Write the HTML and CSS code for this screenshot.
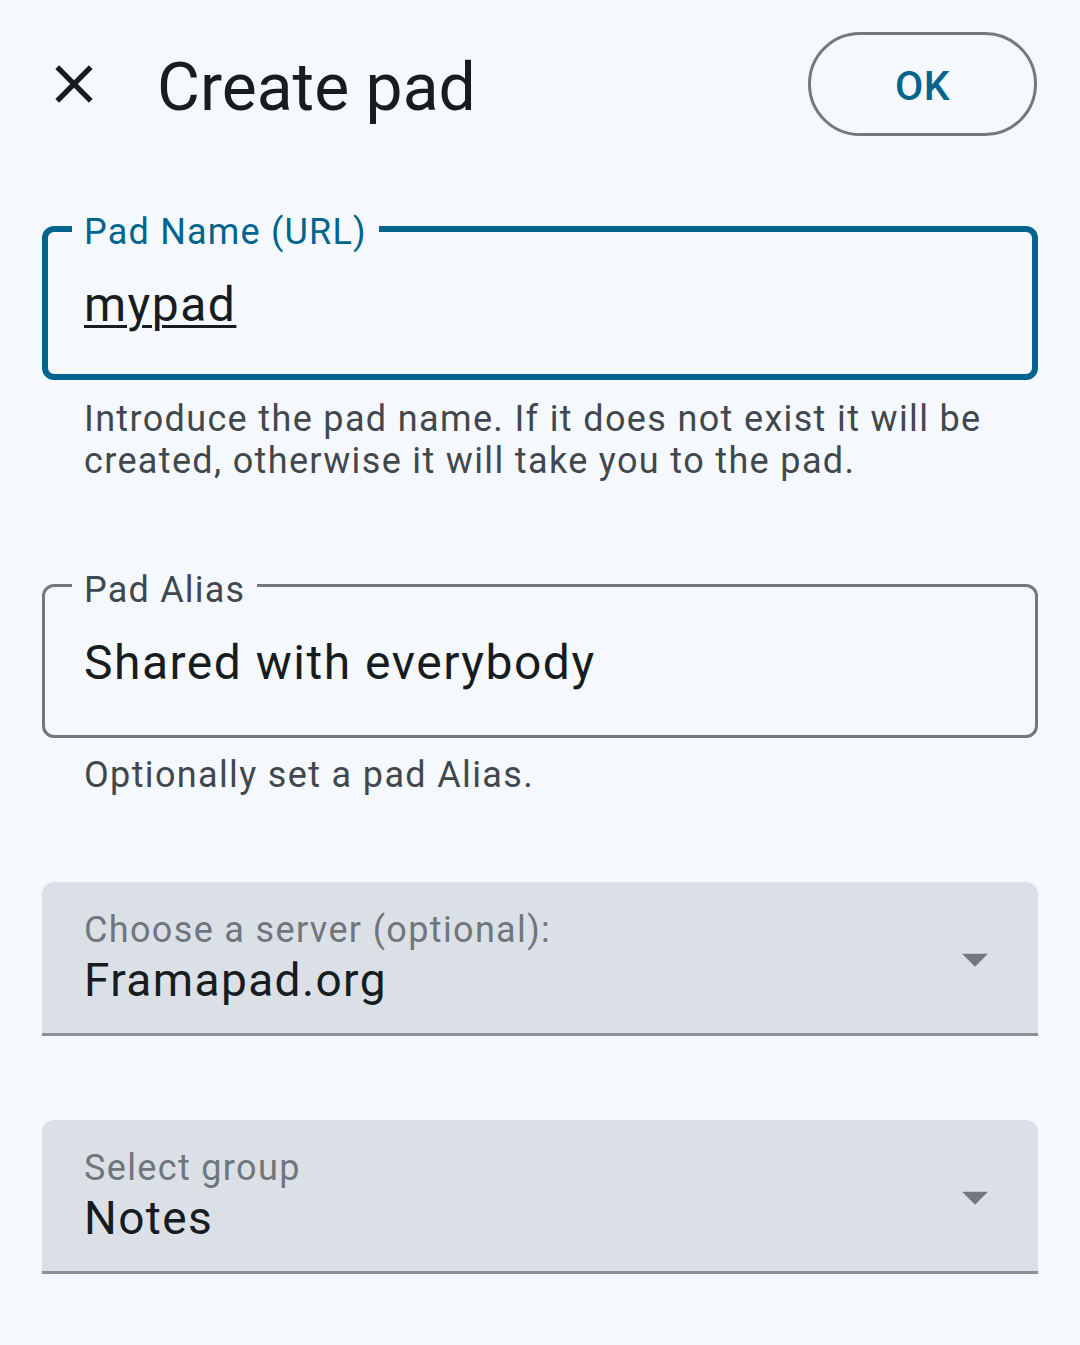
FILE: index.html
```html
<!DOCTYPE html>
<html lang="en">
<head>
<meta charset="utf-8">
<title>Create pad</title>
<link rel="stylesheet" href="styles.css">
</head>
<body>
<div class="screen">
  <header class="topbar">
    <button class="icon-btn" aria-label="Close">
      <svg viewBox="0 0 24 24" width="64" height="64"><path fill="currentColor" d="M19 6.41L17.59 5 12 10.59 6.41 5 5 6.41 10.59 12 5 17.59 6.41 19 12 13.41 17.59 19 19 17.59 13.41 12z"/></svg>
    </button>
    <h1 class="title">Create pad</h1>
    <div class="spacer"></div>
    <button class="ok-btn">OK</button>
  </header>

  <main class="form">
    <div class="outlined focused">
      <span class="float-label">Pad Name (URL)</span>
      <span class="value underlined">mypad</span>
    </div>
    <p class="helper">Introduce the pad name. If it does not exist it will be<br>created, otherwise it will take you to the pad.</p>

    <div class="outlined alias">
      <span class="float-label">Pad Alias</span>
      <span class="value">Shared with everybody</span>
    </div>
    <p class="helper helper-alias">Optionally set a pad Alias.</p>

    <div class="filled server">
      <div class="filled-text">
        <span class="filled-label">Choose a server (optional):</span>
        <span class="filled-value">Framapad.org</span>
      </div>
      <svg class="arrow" viewBox="0 0 24 24" width="62" height="62"><path fill="currentColor" d="M7 10l5 5 5-5z"/></svg>
    </div>

    <div class="filled group">
      <div class="filled-text">
        <span class="filled-label">Select group</span>
        <span class="filled-value">Notes</span>
      </div>
      <svg class="arrow" viewBox="0 0 24 24" width="62" height="62"><path fill="currentColor" d="M7 10l5 5 5-5z"/></svg>
    </div>
  </main>
</div>
</body>
</html>
```

FILE: styles.css
```css
* { box-sizing: border-box; }

html, body {
  margin: 0;
  padding: 0;
  background: #f5f9fd;
}

body {
  font-family: Roboto, "Noto Sans", "Liberation Sans", sans-serif;
  color: #171c20;
  width: 1080px;
  height: 1345px;
  overflow: hidden;
}

.topbar {
  display: flex;
  align-items: center;
  padding: 32px 43px 0 42px;
  height: 136px;
}

.icon-btn {
  width: 64px;
  height: 64px;
  padding: 0;
  margin: 0;
  border: 0;
  background: transparent;
  color: #171c20;
  display: flex;
  align-items: center;
  justify-content: center;
}

.icon-btn svg { display: block; }

.title {
  margin: 7px 0 0 51px;
  font-size: 66px;
  line-height: 66px;
  font-weight: 400;
  letter-spacing: 0;
  color: #171c20;
}

.spacer { flex: 1; }

.ok-btn {
  width: 229px;
  height: 104px;
  border: 3px solid #71787e;
  border-radius: 52px;
  background: transparent;
  color: #00658e;
  font-family: Roboto, "Noto Sans", sans-serif;
  font-size: 41px;
  font-weight: 500;
  letter-spacing: 0.5px;
  padding: 4px 0 0 0;
}

.form {
  padding: 0 42px;
  display: flex;
  flex-direction: column;
}

.outlined {
  position: relative;
  height: 154px;
  border: 3px solid #71787e;
  border-radius: 12px;
  display: flex;
  align-items: center;
  padding-left: 39px;
  padding-top: 4px;
}

.outlined.focused {
  margin-top: 90px;
  border: 6px solid #00658e;
  padding-left: 36px;
}

.outlined.alias {
  margin-top: 102px;
}

.float-label {
  position: absolute;
  left: 27px;
  top: -18px;
  padding: 0 12px;
  background: #f5f9fd;
  font-size: 36px;
  line-height: 42px;
  letter-spacing: 1.2px;
  color: #41484d;
}

.focused .float-label {
  left: 24px;
  top: -21px;
  color: #00658e;
}

.value {
  font-size: 48px;
  line-height: 56px;
  letter-spacing: 1.5px;
  color: #171c20;
}

.underlined {
  text-decoration: underline;
  text-decoration-thickness: 3px;
  text-underline-offset: 4px;
}

.helper {
  margin: 18px 0 0 0;
  padding-left: 42px;
  font-size: 36px;
  line-height: 42px;
  letter-spacing: 1.35px;
  color: #41484d;
}

.helper-alias {
  margin-top: 16px;
}

.filled {
  height: 154px;
  background: #dbe0e6;
  border-bottom: 3px solid #8a9096;
  border-radius: 12px 12px 0 0;
  display: flex;
  align-items: center;
  padding: 0 32px 0 42px;
}

.filled.server { margin-top: 86px; }
.filled.group { margin-top: 84px; }

.filled-text {
  flex: 1;
  display: flex;
  flex-direction: column;
  align-self: flex-start;
  padding-top: 27px;
}

.filled-label {
  font-size: 36px;
  line-height: 42px;
  letter-spacing: 1.35px;
  color: #6f767d;
}

.filled-value {
  margin-top: 2px;
  font-size: 46px;
  line-height: 54px;
  letter-spacing: 1.4px;
  color: #171c20;
}

.arrow {
  display: block;
  color: #71787e;
  margin-top: 2px;
}
```
